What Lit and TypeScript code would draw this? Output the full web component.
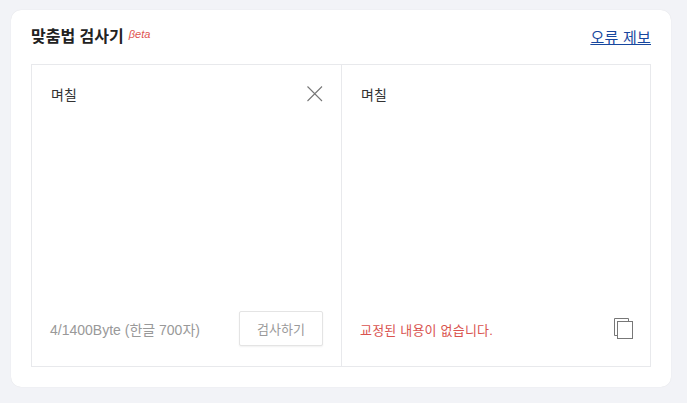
import { LitElement, html, css } from "lit";
import { customElement } from "lit/decorators.js";

@customElement("app-root")
export class AppRoot extends LitElement {
  static styles = css`
    :host {
      display: block;
      width: 687px;
      height: 403px;
      box-sizing: border-box;
      padding: 10px 16px 16px 11px;
      background: #f2f3f7;
      font-family: "Liberation Sans", "Noto Sans CJK KR", sans-serif;
    }
    .card {
      box-sizing: border-box;
      height: 377px;
      background: #fff;
      border-radius: 10px;
      box-shadow: 0 0 1px rgba(0, 0, 0, 0.12);
      padding: 0 20px 20px;
      display: flex;
      flex-direction: column;
    }
    .head {
      height: 54px;
      display: flex;
      justify-content: space-between;
      align-items: flex-start;
    }
    .title {
      margin-top: 17px;
      font-size: 16px;
      line-height: 20px;
      font-weight: 700;
      color: #222;
      display: flex;
    }
    .beta {
      font-size: 11px;
      line-height: 12px;
      font-weight: 400;
      font-style: italic;
      color: #e0534f;
      margin-left: 5px;
      margin-top: 1px;
    }
    .report {
      margin-top: 18px;
      font-size: 15px;
      line-height: 20px;
      letter-spacing: 0.25px;
      color: #17479e;
      text-decoration: underline;
    }
    .box {
      flex: 1;
      display: grid;
      grid-template-columns: 310px 1fr;
      border: 1px solid #e8e9ec;
      min-height: 0;
    }
    .pane {
      display: flex;
      flex-direction: column;
      justify-content: space-between;
      min-width: 0;
    }
    .pane.left {
      border-right: 1px solid #e8e9ec;
      padding: 20px 18px 20px 19px;
    }
    .pane.right {
      padding: 20px 17px 20px 19px;
    }
    .top {
      display: flex;
      justify-content: space-between;
      align-items: flex-start;
    }
    .text {
      font-size: 14px;
      line-height: 20px;
      color: #333;
    }
    .close {
      display: block;
      width: 18px;
      height: 18px;
    }
    .foot {
      display: flex;
      justify-content: space-between;
      align-items: center;
      height: 35px;
    }
    .count {
      font-size: 14px;
      color: #999;
      margin-left: -1px;
    }
    .btn {
      box-sizing: border-box;
      width: 84px;
      height: 35px;
      border: 1px solid #e4e4e4;
      border-radius: 2px;
      background: #fff;
      box-shadow: 0 1px 2px rgba(0, 0, 0, 0.06);
      color: #9a9a9a;
      font: 13px "Liberation Sans", "Noto Sans CJK KR", sans-serif;
      padding: 0;
    }
    .none {
      font-size: 13px;
      letter-spacing: 0.2px;
      color: #d9534f;
      margin-left: -1px;
      margin-top: 2px;
    }
    .copy {
      display: block;
      width: 19px;
      height: 21px;
    }
  `;

  render() {
    return html`
      <div class="card">
        <div class="head">
          <div class="title">맞춤법 검사기<span class="beta">βeta</span></div>
          <a class="report">오류 제보</a>
        </div>
        <div class="box">
          <div class="pane left">
            <div class="top">
              <div class="text">며칠</div>
              <svg class="close" viewBox="0 0 18 18" fill="none" stroke="#777" stroke-width="1.1">
                <path d="M2.5 1.5 17 16M17 1.5 2.5 16" />
              </svg>
            </div>
            <div class="foot">
              <span class="count">4/1400Byte (한글 700자)</span>
              <button class="btn">검사하기</button>
            </div>
          </div>
          <div class="pane right">
            <div class="top"><div class="text">며칠</div></div>
            <div class="foot">
              <span class="none">교정된 내용이 없습니다.</span>
              <svg class="copy" viewBox="0 0 19 21" fill="none" stroke="#777" stroke-width="1">
                <path d="M14.5 3.5V.5H.5V17.5H3.5" />
                <rect x="3.5" y="3.5" width="15" height="17" />
              </svg>
            </div>
          </div>
        </div>
      </div>
    `;
  }
}
